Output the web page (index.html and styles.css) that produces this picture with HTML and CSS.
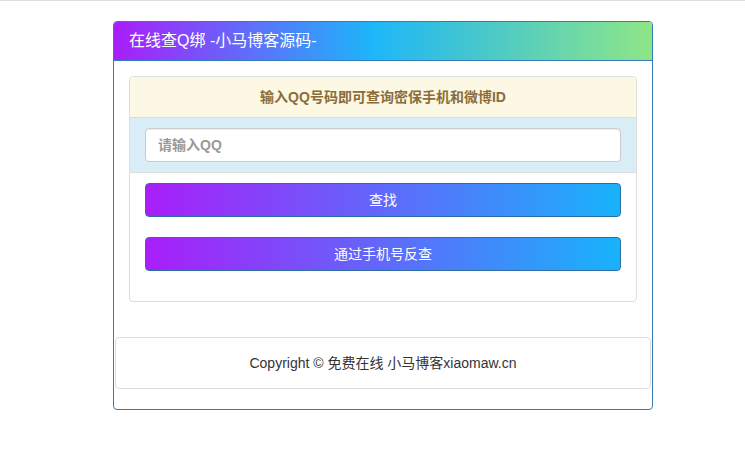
FILE: index.html
```
<!DOCTYPE html>
<html>
<head>
	<title>在线查Q绑 -小马博客源码-</title>
	<meta charset="utf-8">
	<link rel="stylesheet" href="styles.css">
</head>
<body>
	<div class="topline"></div>
	<div class="wrap">
		<div class="panel main">
			<div class="panel-heading">在线查Q绑 -小马博客源码-</div>
			<div class="panel-body">
				<div class="panel inner">
					<div class="tip">输入QQ号码即可查询密保手机和微博ID</div>
					<div class="input-row">
						<input type="text" class="qq" name="qq" placeholder="请输入QQ">
					</div>
					<div class="actions">
						<button type="button" class="btn">查找</button>
						<button type="button" class="btn">通过手机号反查</button>
					</div>
				</div>
			</div>
			<div class="panel footer">
				Copyright © 免费在线 小马博客xiaomaw.cn
			</div>
		</div>
	</div>
</body>
</html>
```

FILE: styles.css
```
* {
	box-sizing: border-box;
}
body {
	margin: 0;
	font-family: "Liberation Sans", "Noto Sans CJK SC", sans-serif;
	font-size: 14px;
	line-height: 20px;
	color: #333;
	background: #fff;
}
.topline {
	height: 2px;
	border-top: 1px solid #e0e0e0;
}
.wrap {
	width: 540px;
	margin: 19px 0 0 113px;
}
.panel {
	background: #fff;
	border: 1px solid #ddd;
	border-radius: 4px;
}
.main {
	border-color: #337ab7;
	padding-bottom: 20px;
}
.panel-heading {
	height: 39px;
	padding: 10px 15px;
	font-size: 16px;
	line-height: 18px;
	color: #fff;
	border-bottom: 1px solid #337ab7;
	border-radius: 3px 3px 0 0;
	background: linear-gradient(to right, #a91ef9 0%, #1db6f9 48%, #8de586 100%);
}
.panel-body {
	padding: 15px;
}
.inner {
	margin-bottom: 20px;
}
.tip {
	height: 41px;
	padding: 10px 15px;
	text-align: center;
	font-weight: bold;
	color: #8a6d3b;
	background: #fcf8e3;
	border-bottom: 1px solid #ddd;
	border-radius: 3px 3px 0 0;
}
.input-row {
	padding: 10px 15px;
	background: #d9edf7;
	border-bottom: 1px solid #ddd;
}
.qq {
	display: block;
	width: 100%;
	height: 34px;
	padding: 6px 12px;
	font: inherit;
	color: #555;
	background: #fff;
	border: 1px solid #ccc;
	border-radius: 4px;
	box-shadow: inset 0 1px 1px rgba(0, 0, 0, .075);
}
.qq::placeholder {
	color: #999;
	font-weight: bold;
}
.actions {
	display: flex;
	flex-direction: column;
	gap: 20px;
	padding: 10px 15px 30px;
}
.btn {
	display: block;
	width: 100%;
	height: 34px;
	padding: 6px 12px;
	font: inherit;
	color: #fff;
	border: 1px solid #2e6da4;
	border-radius: 4px;
	background: linear-gradient(to right, #a91ef9, #18b3fb);
}
.footer {
	margin: 0 1px;
	padding: 15px;
	text-align: center;
	font-size: 14px;
}
```
